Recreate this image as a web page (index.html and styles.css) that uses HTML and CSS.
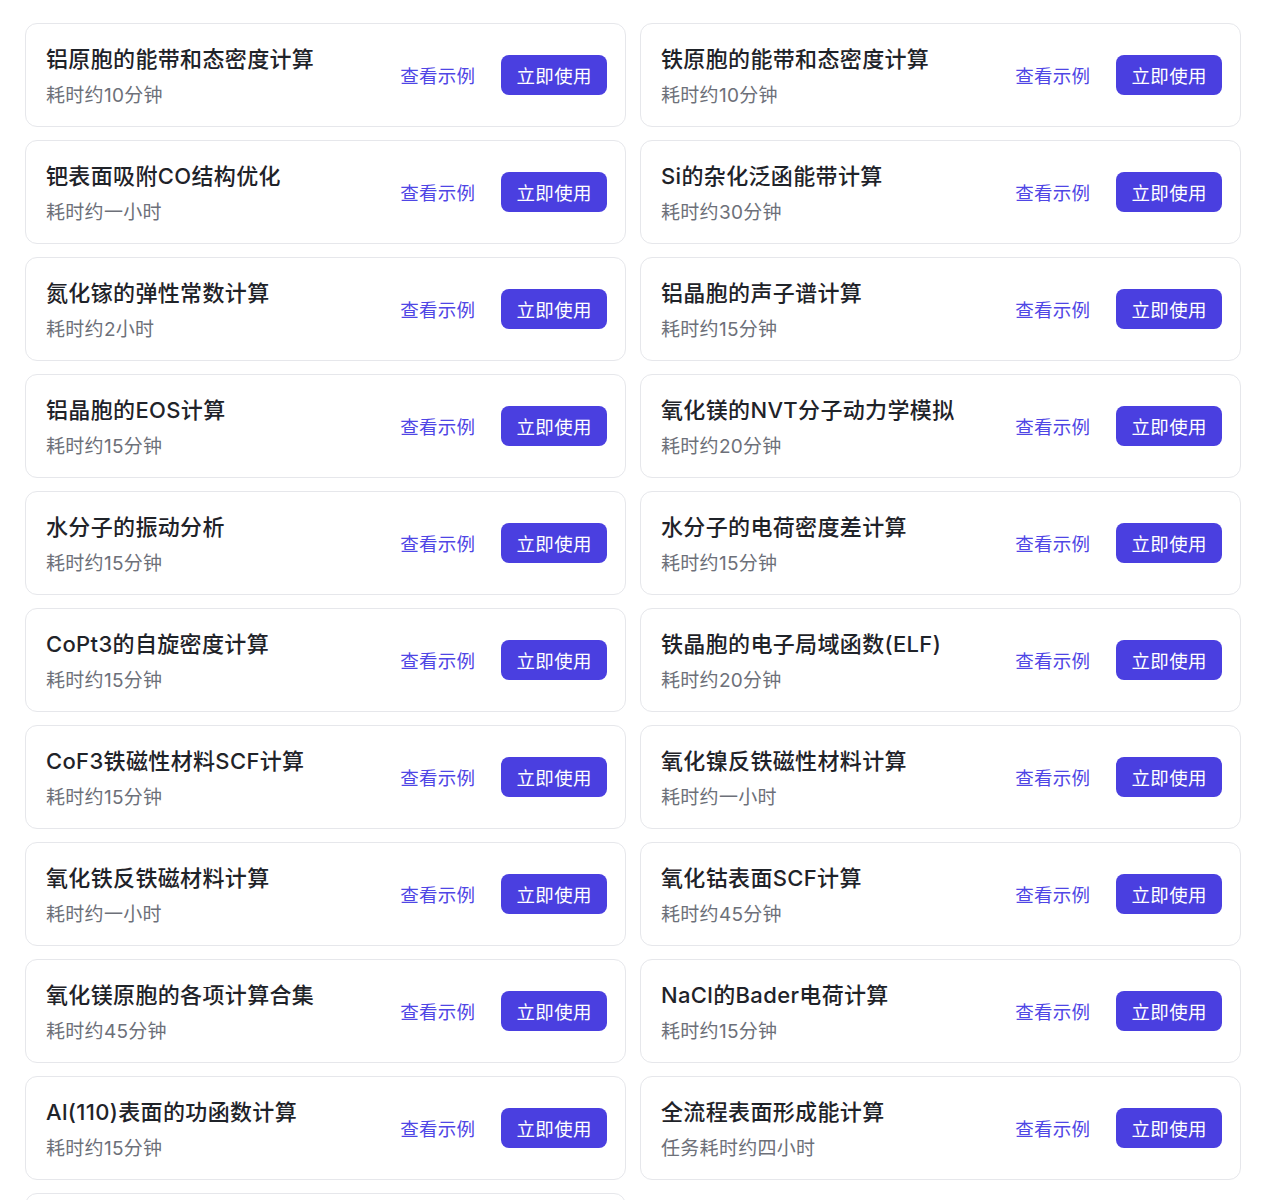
FILE: index.html
```html
<!DOCTYPE html>
<html lang="zh-CN">
<head>
<meta charset="utf-8">
<title>计算示例</title>
<link rel="stylesheet" href="styles.css">
</head>
<body>
<div class="grid">
  <div class="card"><div class="info"><div class="title">铝原胞的能带和态密度计算</div><div class="sub">耗时约10分钟</div></div><div class="actions"><a class="link">查看示例</a><a class="btn">立即使用</a></div></div>
  <div class="card"><div class="info"><div class="title">铁原胞的能带和态密度计算</div><div class="sub">耗时约10分钟</div></div><div class="actions"><a class="link">查看示例</a><a class="btn">立即使用</a></div></div>
  <div class="card"><div class="info"><div class="title">钯表面吸附CO结构优化</div><div class="sub">耗时约一小时</div></div><div class="actions"><a class="link">查看示例</a><a class="btn">立即使用</a></div></div>
  <div class="card"><div class="info"><div class="title">Si的杂化泛函能带计算</div><div class="sub">耗时约30分钟</div></div><div class="actions"><a class="link">查看示例</a><a class="btn">立即使用</a></div></div>
  <div class="card"><div class="info"><div class="title">氮化镓的弹性常数计算</div><div class="sub">耗时约2小时</div></div><div class="actions"><a class="link">查看示例</a><a class="btn">立即使用</a></div></div>
  <div class="card"><div class="info"><div class="title">铝晶胞的声子谱计算</div><div class="sub">耗时约15分钟</div></div><div class="actions"><a class="link">查看示例</a><a class="btn">立即使用</a></div></div>
  <div class="card"><div class="info"><div class="title">铝晶胞的EOS计算</div><div class="sub">耗时约15分钟</div></div><div class="actions"><a class="link">查看示例</a><a class="btn">立即使用</a></div></div>
  <div class="card"><div class="info"><div class="title">氧化镁的NVT分子动力学模拟</div><div class="sub">耗时约20分钟</div></div><div class="actions"><a class="link">查看示例</a><a class="btn">立即使用</a></div></div>
  <div class="card"><div class="info"><div class="title">水分子的振动分析</div><div class="sub">耗时约15分钟</div></div><div class="actions"><a class="link">查看示例</a><a class="btn">立即使用</a></div></div>
  <div class="card"><div class="info"><div class="title">水分子的电荷密度差计算</div><div class="sub">耗时约15分钟</div></div><div class="actions"><a class="link">查看示例</a><a class="btn">立即使用</a></div></div>
  <div class="card"><div class="info"><div class="title">CoPt3的自旋密度计算</div><div class="sub">耗时约15分钟</div></div><div class="actions"><a class="link">查看示例</a><a class="btn">立即使用</a></div></div>
  <div class="card"><div class="info"><div class="title">铁晶胞的电子局域函数(ELF)</div><div class="sub">耗时约20分钟</div></div><div class="actions"><a class="link">查看示例</a><a class="btn">立即使用</a></div></div>
  <div class="card"><div class="info"><div class="title">CoF3铁磁性材料SCF计算</div><div class="sub">耗时约15分钟</div></div><div class="actions"><a class="link">查看示例</a><a class="btn">立即使用</a></div></div>
  <div class="card"><div class="info"><div class="title">氧化镍反铁磁性材料计算</div><div class="sub">耗时约一小时</div></div><div class="actions"><a class="link">查看示例</a><a class="btn">立即使用</a></div></div>
  <div class="card"><div class="info"><div class="title">氧化铁反铁磁材料计算</div><div class="sub">耗时约一小时</div></div><div class="actions"><a class="link">查看示例</a><a class="btn">立即使用</a></div></div>
  <div class="card"><div class="info"><div class="title">氧化钴表面SCF计算</div><div class="sub">耗时约45分钟</div></div><div class="actions"><a class="link">查看示例</a><a class="btn">立即使用</a></div></div>
  <div class="card"><div class="info"><div class="title">氧化镁原胞的各项计算合集</div><div class="sub">耗时约45分钟</div></div><div class="actions"><a class="link">查看示例</a><a class="btn">立即使用</a></div></div>
  <div class="card"><div class="info"><div class="title">NaCl的Bader电荷计算</div><div class="sub">耗时约15分钟</div></div><div class="actions"><a class="link">查看示例</a><a class="btn">立即使用</a></div></div>
  <div class="card"><div class="info"><div class="title">Al(110)表面的功函数计算</div><div class="sub">耗时约15分钟</div></div><div class="actions"><a class="link">查看示例</a><a class="btn">立即使用</a></div></div>
  <div class="card"><div class="info"><div class="title">全流程表面形成能计算</div><div class="sub">任务耗时约四小时</div></div><div class="actions"><a class="link">查看示例</a><a class="btn">立即使用</a></div></div>
  <div class="card card-stub"></div>
</div>
</body>
</html>
```

FILE: styles.css
```css
html, body {
  margin: 0;
  padding: 0;
  background: #ffffff;
  font-family: "Inter", "Noto Sans CJK SC", "Noto Sans", sans-serif;
  color: #1f2329;
}

.grid {
  display: grid;
  grid-template-columns: 601px 601px;
  column-gap: 14px;
  row-gap: 13px;
  padding: 23px 0 0 25px;
}

.card {
  box-sizing: border-box;
  height: 104px;
  border: 1px solid #e6e7eb;
  border-radius: 12px;
  background: #fff;
  display: flex;
  align-items: center;
  justify-content: space-between;
  padding: 0 18px 0 20px;
}

.info {
  display: flex;
  flex-direction: column;
  gap: 7px;
  padding-top: 2px;
}

.title {
  font-size: 22px;
  line-height: 32px;
  font-weight: 500;
  color: #1f2329;
  letter-spacing: 0.35px;
}

.sub {
  font-size: 19px;
  line-height: 28px;
  color: #6d7079;
  letter-spacing: 0.3px;
}

.actions {
  display: flex;
  align-items: center;
  gap: 26px;
}

.link {
  font-size: 18.5px;
  color: #4f46e5;
  cursor: pointer;
  letter-spacing: 0.3px;
}

.btn {
  box-sizing: border-box;
  height: 40px;
  padding: 0 15px;
  border-radius: 8px;
  background: #4a3fe0;
  color: #fff;
  font-size: 18.5px;
  letter-spacing: 0.4px;
  display: flex;
  align-items: center;
  cursor: pointer;
}
```
